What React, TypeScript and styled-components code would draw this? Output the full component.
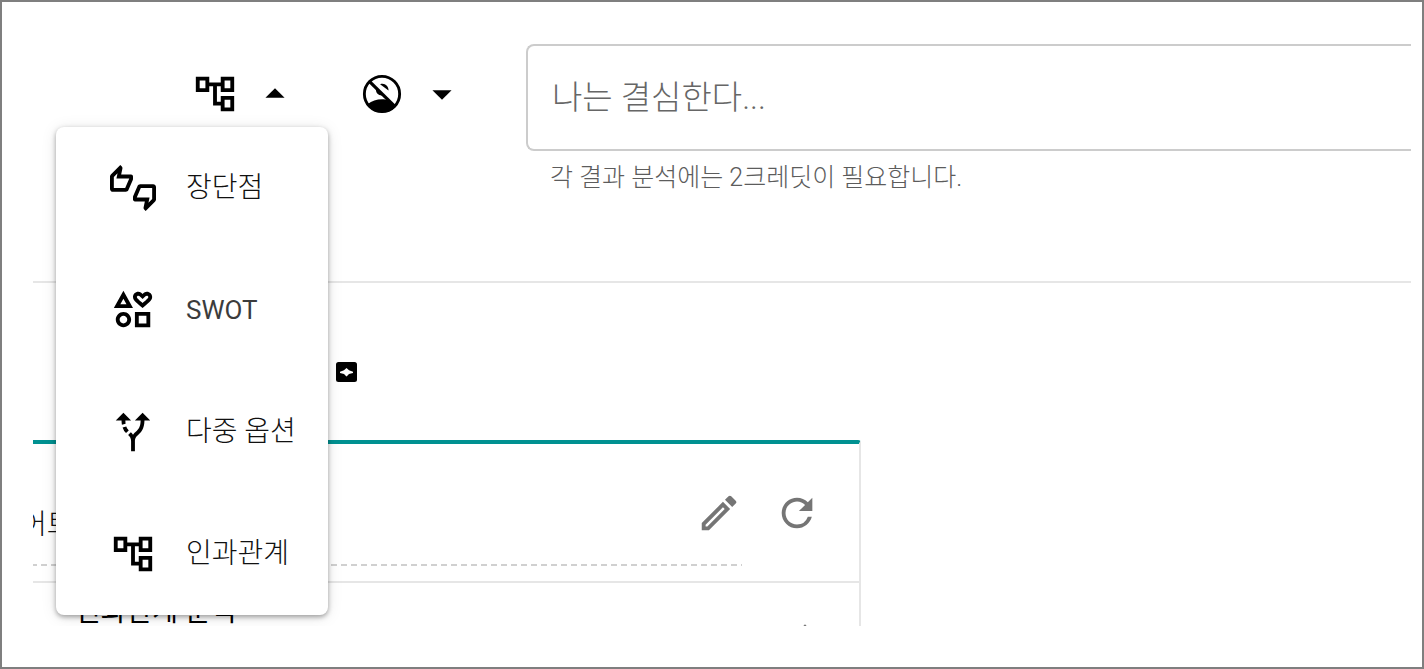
import React from 'react';
import styled, { createGlobalStyle } from 'styled-components';
import {
  MdOutlineAccountTree,
  MdArrowDropUp,
  MdArrowDropDown,
  MdOutlineThumbsUpDown,
  MdOutlineInterests,
  MdAltRoute,
  MdOutlineEdit,
  MdRefresh,
  MdExpandLess,
} from 'react-icons/md';

const GlobalStyle = createGlobalStyle`
  * { box-sizing: border-box; }
  body {
    margin: 0;
    background: #fff;
    color: #111;
    font-family: Roboto, "Noto Sans CJK KR", sans-serif;
    font-weight: 300;
  }
  button, input { font: inherit; color: inherit; }
`;

const Frame = styled.div`
  display: flex;
  height: 100vh;
  padding: 0 11px 41px 31px;
  border: 2px solid #7f7f7f;
`;

const Page = styled.main`
  flex: 1;
  min-width: 0;
  overflow: hidden;
`;

const Header = styled.header`
  display: flex;
  gap: 61px;
  padding: 42px 0 87px 159px;
  border-bottom: 2px solid #e6e6e6;
`;

const PickerWrap = styled.div`
  position: relative;
`;

const PickerButton = styled.button`
  display: flex;
  align-items: center;
  gap: 14px;
  height: 100px;
  padding: 0;
  border: 0;
  background: none;
  color: #000;
  cursor: pointer;
`;

const Menu = styled.ul`
  position: absolute;
  z-index: 2;
  top: 83px;
  left: -136px;
  width: 272px;
  margin: 0;
  padding: 0;
  list-style: none;
  border-radius: 8px;
  background: #fff;
  box-shadow: 0 2px 5px rgba(0, 0, 0, 0.35), 0 2px 16px rgba(0, 0, 0, 0.1);
`;

const MenuItem = styled.button<{ $latin?: boolean }>`
  display: flex;
  align-items: center;
  gap: 30px;
  width: 100%;
  height: 122px;
  padding: 0 0 0 54px;
  border: 0;
  background: none;
  font-size: ${(p) => (p.$latin ? 26 : 28)}px;
  font-weight: ${(p) => (p.$latin ? 400 : 300)};
  color: ${(p) => (p.$latin ? '#3c3c3c' : '#111')};
  line-height: 32px;
  white-space: nowrap;
  cursor: pointer;

  svg { flex: none; color: #000; }
`;

const Field = styled.div`
  flex: 1;
  min-width: 0;
`;

const DecisionInput = styled.input`
  display: block;
  width: 100%;
  height: 107px;
  padding: 0 24px;
  border: 2px solid #ccc;
  border-right: 0;
  border-radius: 8px 0 0 8px;
  background: #fff;
  font-size: 33px;
  outline: none;

  &::placeholder { color: #666; opacity: 1; }
`;

const Helper = styled.p`
  margin: 11px 0 0;
  padding-left: 24px;
  font-size: 25px;
  line-height: 32px;
  color: #5c5c5c;
`;

const Toolbar = styled.div`
  display: flex;
  padding: 75px 0 54px 299px;
`;

const IconButton = styled.button`
  display: flex;
  padding: 0;
  border: 0;
  background: none;
  color: #757575;
  cursor: pointer;
`;

const Card = styled.section`
  width: 828px;
  max-width: 100%;
  border-top: 4px solid #009191;
  border-right: 2px solid #e6e6e6;
  border-top-right-radius: 3px;
`;

const CardHead = styled.div`
  display: flex;
  align-items: center;
  gap: 32px;
  height: 139px;
  padding: 0 39px 0 0;
  border-bottom: 2px solid #e6e6e6;
`;

const TitleField = styled.div`
  display: flex;
  flex: 1;
  align-items: center;
  justify-content: space-between;
  height: 106px;
  background: repeating-linear-gradient(90deg, #d0d0d0 0 4px, transparent 4px 8px, #d0d0d0 8px 10px) left bottom / 100% 2px no-repeat;
`;

const CardTitle = styled.h2`
  margin: 0 0 0 -12px;
  padding-top: 24px;
  font-size: 28px;
  font-weight: 300;
  line-height: 32px;
`;

const CardRow = styled.div`
  display: flex;
  align-items: flex-start;
  justify-content: space-between;
  padding: 13px 31px 12px 42px;
  color: #000;
  font-size: 28px;
  font-weight: 400;
  line-height: 32px;
`;

const RowAction = styled(IconButton)`
  padding-top: 13px;
`;

const ICON = 46;

const NoPersonIcon = () => (
  <svg width={ICON} height={ICON} viewBox="0 0 24 24" fill="none" aria-hidden="true">
    <circle cx="12" cy="12" r="9.2" stroke="currentColor" strokeWidth="1.5" />
    <path d="M4.6 17.2C6.6 15.6 9.2 14.7 12 14.7c1.300 0 2.300.1 3.400.5l4 3.200A9.600 9.600 0 0 1 12 21.600a9.600 9.600 0 0 1-7.400-4.400z" fill="currentColor" />
    <path d="M5.400 5.400l13.400 13.200" stroke="currentColor" strokeWidth="1.700" />
    <path d="M11 6.900c2.300-.9 4.500.9 4.400 3.300z" fill="currentColor" />
    <path d="M8.900 9.300l3.500 3.500c-2.200.3-3.900-1.500-3.500-3.500z" fill="currentColor" />
  </svg>
);

const ArchiveIcon = () => (
  <svg width={28} height={28} viewBox="0 0 28 28" aria-hidden="true">
    <rect x="4" y="4" width="21" height="20" rx="2.500" fill="#000" />
    <path d="M14.500 10l2.500 2.200 4 1.600v1.200l-4 1-2.500 2.500-2.500-2.500-4-1v-1.200l4-1.600z" fill="#fff" />
  </svg>
);

const options = [
  { label: '장단점', Icon: MdOutlineThumbsUpDown },
  { label: 'SWOT', Icon: MdOutlineInterests, latin: true },
  { label: '다중 옵션', Icon: MdAltRoute },
  { label: '인과관계', Icon: MdOutlineAccountTree },
];

export default function App() {
  return (
    <>
      <GlobalStyle />
      <Frame>
        <Page>
          <Header>
            <PickerWrap>
              <PickerButton type="button" aria-haspopup="menu" aria-expanded="true" aria-label="분석 유형">
                <MdOutlineAccountTree size={ICON} />
                <MdArrowDropUp size={ICON} />
              </PickerButton>
              <Menu role="menu">
                {options.map(({ label, Icon, latin }) => (
                  <li key={label} role="none">
                    <MenuItem type="button" role="menuitem" $latin={latin}>
                      <Icon size={ICON} />
                      {label}
                    </MenuItem>
                  </li>
                ))}
              </Menu>
            </PickerWrap>
            <PickerWrap>
              <PickerButton type="button" aria-haspopup="menu" aria-label="공개 범위">
                <NoPersonIcon />
                <MdArrowDropDown size={ICON} />
              </PickerButton>
            </PickerWrap>
            <Field>
              <DecisionInput type="text" placeholder="나는 결심한다..." aria-label="결심" aria-describedby="credit-help" />
              <Helper id="credit-help">각 결과 분석에는 2크레딧이 필요합니다.</Helper>
            </Field>
          </Header>
          <Toolbar>
            <IconButton type="button" aria-label="보관">
              <ArchiveIcon />
            </IconButton>
          </Toolbar>
          <Card>
            <CardHead>
              <TitleField>
                <CardTitle>어트</CardTitle>
                <IconButton type="button" aria-label="편집">
                  <MdOutlineEdit size={ICON} />
                </IconButton>
              </TitleField>
              <IconButton type="button" aria-label="새로 고침">
                <MdRefresh size={ICON} />
              </IconButton>
            </CardHead>
            <CardRow>
              <span>인과관계 분석</span>
              <RowAction type="button" aria-label="접기">
                <MdExpandLess size={ICON} />
              </RowAction>
            </CardRow>
          </Card>
        </Page>
      </Frame>
    </>
  );
}
